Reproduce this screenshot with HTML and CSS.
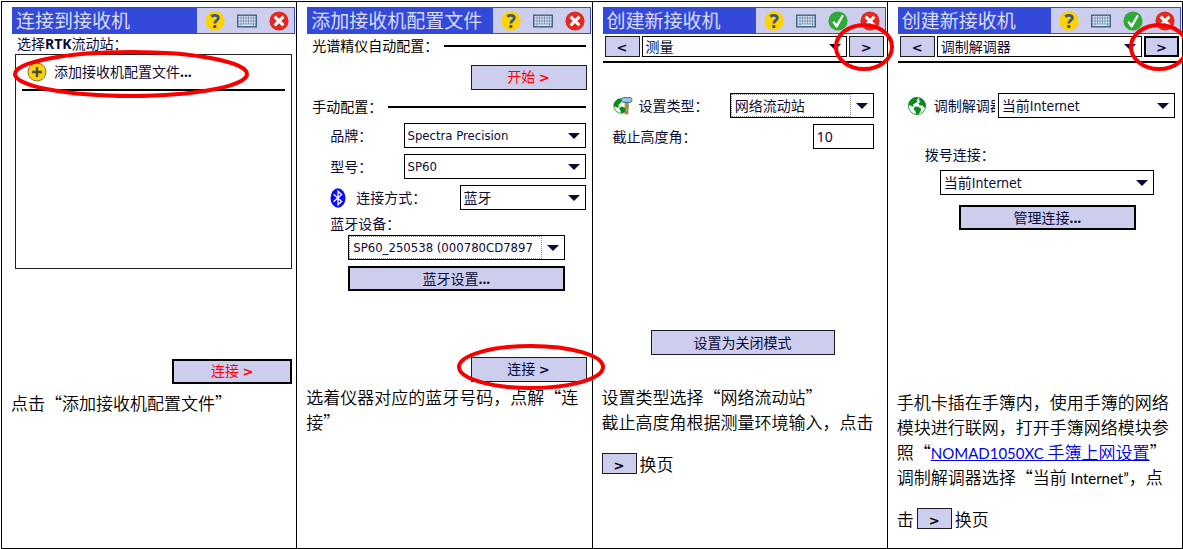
FILE: index.html
```html
<!DOCTYPE html>
<html lang="zh-CN">
    <head>
        <meta charset="UTF-8">
        <meta name="viewport" content="width=device-width, initial-scale=1.0">
        <title>接收机连接步骤</title>
        <link rel="stylesheet" href="styles.css">
    </head>
    <body>
        <!-- Shared icons -->
        <svg class="sprite" aria-hidden="true">
            <symbol id="i-help" viewBox="0 0 20 20">
                <circle cx="10" cy="10" r="9.7" fill="#ffd204"/>
                <path d="M6.2 5.6C8.4 3.9 13.4 3.8 13.4 7.1C13.4 9.6 9.8 9.4 9.8 12.4" fill="none" stroke="#3c5878" stroke-width="2.8"/>
                <rect x="8.3" y="14" width="3" height="3" fill="#3c5878"/>
            </symbol>
            <symbol id="i-keys" viewBox="0 0 20 14">
                <rect x="0.75" y="1.25" width="18.5" height="11.5" fill="#e4e8f6" stroke="#3f6487" stroke-width="1.5"/>
                <path d="M1 4H19M1 7H19M1 10H19" stroke="#6d8db0" stroke-width="0.8"/>
                <path d="M4 1V13M6.5 1V10M9 1V10M11.5 1V10M14 1V10M16.5 1V13" stroke="#6d8db0" stroke-width="0.8"/>
            </symbol>
            <symbol id="i-ok" viewBox="0 0 20 20">
                <circle cx="10" cy="10" r="9.6" fill="#2fa836"/>
                <path d="M4.4 11.2L6 10L8.6 12.8L14 3.8L15.8 4.8L9.4 16.4H8Z" fill="#fff"/>
            </symbol>
            <symbol id="i-close" viewBox="0 0 20 20">
                <circle cx="10" cy="10" r="9.6" fill="#e2281f"/>
                <path d="M5.6 5.6L14.4 14.4M14.4 5.6L5.6 14.4" stroke="#fff" stroke-width="3"/>
            </symbol>
            <symbol id="i-globe" viewBox="0 0 20 20">
                <circle cx="10" cy="10" r="8.6" fill="#f6fbf6" stroke="#0a8a1c" stroke-width="0.8"/>
                <path d="M1.4 9C1.6 5 5 1.6 9.6 1.3L11.4 2.6L9.4 4.2L10.6 5.6L8 7.6L6 8.2L6.8 10L5.4 10.6L3.6 9.4Z" fill="#0a8a1c"/>
                <path d="M12.6 1.8C16 2.8 18.6 6 18.7 10L17.4 12L15.6 9.4L12.6 9.2L11.4 7.4L13.4 5.6L12 4Z" fill="#0a8a1c"/>
                <path d="M7.4 11L10.6 10.6L14 12.6L13.6 15.4L11 18.6L9 18.4L8.6 15.4L6.8 13.4Z" fill="#0a8a1c"/>
            </symbol>
        </svg>

        <main class="steps">
            <section class="step">
                <div class="screen">
                    <header class="bar">
                        <h2>连接到接收机</h2>
                        <div class="tools">
                            <button type="button" aria-label="帮助"><svg class="icon"><use href="#i-help"/></svg></button>
                            <button type="button" aria-label="键盘"><svg class="keys"><use href="#i-keys"/></svg></button>
                            <button type="button" aria-label="关闭"><svg class="icon"><use href="#i-close"/></svg></button>
                        </div>
                    </header>
                    <p class="list-title">选择<b>RTK</b>流动站：</p>
                    <div class="list">
                        <button type="button" class="list-item">
                            <svg class="icon" viewBox="0 0 20 20" aria-hidden="true">
                                <circle cx="10" cy="10" r="9" fill="#ffd204" stroke="#77744a"/>
                                <path d="M10 5V15M5 10H15" stroke="#4a4a3c" stroke-width="2.4"/>
                            </svg>
                            添加接收机配置文件<b>...</b>
                        </button>
                    </div>
                    <button type="button" class="btn thick red connect-first">连接 <b class="arrow">&gt;</b></button>
                    <svg class="mark mark-list" viewBox="0 0 236 48" aria-hidden="true">
                        <ellipse cx="118" cy="24" rx="116" ry="22"/>
                    </svg>
                </div>
                <p class="note note-first">点击“添加接收机配置文件”</p>
            </section>

            <section class="step">
                <div class="screen">
                    <header class="bar">
                        <h2>添加接收机配置文件</h2>
                        <div class="tools">
                            <button type="button" aria-label="帮助"><svg class="icon"><use href="#i-help"/></svg></button>
                            <button type="button" aria-label="键盘"><svg class="keys"><use href="#i-keys"/></svg></button>
                            <button type="button" aria-label="关闭"><svg class="icon"><use href="#i-close"/></svg></button>
                        </div>
                    </header>
                    <h3 class="rule">光谱精仪自动配置：</h3>
                    <button type="button" class="btn red start">开始 <b class="arrow">&gt;</b></button>
                    <h3 class="rule">手动配置：</h3>
                    <div class="fields">
                        <div class="row">
                            <label for="brand">品牌：</label>
                            <span class="pick wide latin"><select id="brand"><option>Spectra Precision</option></select></span>
                        </div>
                        <div class="row">
                            <label for="model">型号：</label>
                            <span class="pick wide latin"><select id="model"><option>SP60</option></select></span>
                        </div>
                        <div class="row">
                            <svg class="bt" viewBox="0 0 16 20" aria-hidden="true">
                                <ellipse cx="8" cy="10" rx="7.5" ry="9.7" fill="#0a0aff"/>
                                <path d="M3.6 6.2L11.6 13.4L8 16.8V3.2L11.6 6.6L3.6 13.8" fill="none" stroke="#fff" stroke-width="1.3"/>
                            </svg>
                            <label for="link">连接方式：</label>
                            <span class="pick mid"><select id="link"><option>蓝牙</option></select></span>
                        </div>
                    </div>
                    <div class="device">
                        <label for="device">蓝牙设备：</label>
                        <span class="pick focus latin"><select id="device"><option>SP60_250538 (000780CD7897</option></select></span>
                        <button type="button" class="btn thick">蓝牙设置<b>...</b></button>
                    </div>
                    <div class="connect">
                        <button type="button" class="btn">连接 <b class="arrow">&gt;</b></button>
                        <svg class="mark mark-connect" viewBox="0 0 148 47" aria-hidden="true">
                            <ellipse cx="74" cy="23" rx="72" ry="21"/>
                        </svg>
                    </div>
                </div>
                <p class="note">选着仪器对应的蓝牙号码，点解“连<br>接”</p>
            </section>

            <section class="step">
                <div class="screen">
                    <header class="bar">
                        <h2>创建新接收机</h2>
                        <div class="tools">
                            <button type="button" aria-label="帮助"><svg class="icon"><use href="#i-help"/></svg></button>
                            <button type="button" aria-label="键盘"><svg class="keys"><use href="#i-keys"/></svg></button>
                            <button type="button" aria-label="确定"><svg class="icon"><use href="#i-ok"/></svg></button>
                            <button type="button" aria-label="关闭"><svg class="icon"><use href="#i-close"/></svg></button>
                        </div>
                    </header>
                    <nav class="pager">
                        <button type="button" class="btn"><b class="arrow">&lt;</b></button>
                        <span class="pick"><select aria-label="页面"><option>测量</option></select></span>
                        <button type="button" class="btn"><b class="arrow">&gt;</b></button>
                        <svg class="mark mark-next" viewBox="0 0 62 48" aria-hidden="true">
                            <ellipse cx="31" cy="24" rx="28" ry="22"/>
                        </svg>
                    </nav>
                    <div class="setup">
                        <div class="row">
                            <svg class="icon" viewBox="0 0 20 20" aria-hidden="true">
                                <circle cx="8" cy="10" r="7.2" fill="#f6fbf6" stroke="#0a8a1c" stroke-width="0.8"/>
                                <path d="M0.8 10C0.8 6 4 2.6 8.4 2.6L9 5L6.6 8L5.4 9L6 11L4 11.6Z" fill="#0a8a1c"/>
                                <path d="M6 12L9 10.6L12.4 12V16L8.4 17.4L7.4 14.6Z" fill="#0a8a1c"/>
                                <path d="M12.2 6H15V18H12.2Z" fill="#b99a45" stroke="#6c5a2a" stroke-width="0.6"/>
                                <rect x="8.5" y="1.6" width="10.5" height="4.8" rx="2.2" fill="#93c8e8" stroke="#48708c"/>
                            </svg>
                            <label for="kind">设置类型：</label>
                            <span class="pick focus"><select id="kind"><option>网络流动站</option></select></span>
                        </div>
                        <div class="row">
                            <label for="angle">截止高度角：</label>
                            <input type="text" id="angle" value="10">
                        </div>
                    </div>
                    <button type="button" class="btn off-mode">设置为关闭模式</button>
                </div>
                <p class="note">设置类型选择“网络流动站”<br>截止高度角根据测量环境输入，点击</p>
                <p class="note turn"><button type="button" class="btn"><b class="arrow">&gt;</b></button>换页</p>
            </section>

            <section class="step">
                <div class="screen">
                    <header class="bar">
                        <h2>创建新接收机</h2>
                        <div class="tools">
                            <button type="button" aria-label="帮助"><svg class="icon"><use href="#i-help"/></svg></button>
                            <button type="button" aria-label="键盘"><svg class="keys"><use href="#i-keys"/></svg></button>
                            <button type="button" aria-label="确定"><svg class="icon"><use href="#i-ok"/></svg></button>
                            <button type="button" aria-label="关闭"><svg class="icon"><use href="#i-close"/></svg></button>
                        </div>
                    </header>
                    <nav class="pager">
                        <button type="button" class="btn"><b class="arrow">&lt;</b></button>
                        <span class="pick"><select aria-label="页面"><option>调制解调器</option></select></span>
                        <button type="button" class="btn thick"><b class="arrow">&gt;</b></button>
                        <svg class="mark mark-next" viewBox="0 0 62 48" aria-hidden="true">
                            <ellipse cx="31" cy="24" rx="28" ry="22"/>
                        </svg>
                    </nav>
                    <div class="modem">
                        <svg class="icon" aria-hidden="true"><use href="#i-globe"/></svg>
                        <label for="modem">调制解调器</label>
                        <span class="pick"><select id="modem"><option>当前Internet</option></select></span>
                    </div>
                    <div class="dial">
                        <label for="dial">拨号连接：</label>
                        <span class="pick"><select id="dial"><option>当前Internet</option></select></span>
                        <button type="button" class="btn thick">管理连接<b>...</b></button>
                    </div>
                </div>
                <p class="note">手机卡插在手簿内，使用手簿的网络<br>模块进行联网，打开手簿网络模块参<br>照“<a href="#"><span class="en">NOMAD1050XC</span> 手簿上网设置</a>”<br>调制解调器选择“当前 <span class="en">Internet”</span>，点</p>
                <p class="note turn">击<button type="button" class="btn"><b class="arrow">&gt;</b></button>换页</p>
            </section>
        </main>
    </body>
</html>
```
FILE: styles.css
```css
* {
    box-sizing: border-box;
}
body {
    margin: 0;
    padding: 1px 0 0 1px;
    background: white;
    color: #0b0b36;
    font-family: "Noto Sans", "Noto Sans CJK SC", sans-serif;
    font-size: 14px;
    line-height: 20px;
}
h2, h3, p {
    margin: 0;
    font-weight: normal;
}
button, select, input {
    font: inherit;
    color: inherit;
    border-radius: 0;
}
button {
    padding: 0;
    border: none;
    background: none;
    cursor: pointer;
}
.sprite {
    position: absolute;
    width: 0;
    height: 0;
}
.icon {
    width: 20px;
    height: 20px;
    flex: none;
    display: block;
}
.keys {
    width: 20px;
    height: 14px;
    display: block;
}

/* Four columns with table lines */
.steps {
    display: grid;
    grid-template-columns: repeat(4, 1fr);
    min-height: calc(100vh - 1px);
    border: 1px solid black;
    border-right: none;
    overflow: hidden;
}
.step {
    padding: 5px 1px 8px 10px;
    border-right: 1px solid black;
    min-width: 0;
    display: flex;
    flex-direction: column;
}
.screen {
    position: relative;
    height: 377px;
    display: flex;
    flex-direction: column;
}
.step:last-child .screen {
    height: 382px;
}

/* Title bar */
.bar {
    display: flex;
    justify-content: space-between;
    height: 27px;
    padding: 1px;
    background: #3349d9;
}
.bar h2 {
    padding-left: 3px;
    color: #dcdcff;
    font-size: 19px;
    line-height: 26px;
    white-space: nowrap;
}
.tools {
    display: flex;
    align-items: center;
    gap: 12px;
    padding: 0 5px 0 8px;
    background: #cdcdee;
}

/* Buttons and drop-downs */
.btn {
    height: 25px;
    border: 1px solid #1c1c24;
    background: #cdcdee;
    line-height: 20px;
}
.arrow {
    font-family: "DejaVu Sans", sans-serif;
    font-size: 13px;
}
.thick {
    border: 2px solid black;
}
.red {
    color: red;
}
.pick {
    position: relative;
    height: 25px;
    border: 1px solid black;
    background: white;
    display: block;
    font-family: "DejaVu Sans Condensed", "Noto Sans CJK SC", sans-serif;
}
.pick::after {
    content: "";
    position: absolute;
    right: 5px;
    top: 9px;
    border: 6px solid transparent;
    border-top-color: #0b0b36;
    border-bottom: none;
    pointer-events: none;
}
.pick select {
    appearance: none;
    width: 100%;
    height: 23px;
    padding: 0 22px 0 3px;
    border: none;
    background: none;
    display: block;
}
.latin {
    font-size: 13px;
}
.focus select {
    width: calc(100% - 22px);
    padding-right: 0;
    border: 1px dotted #888;
}
.row {
    display: flex;
    align-items: center;
}
.row .pick {
    margin-left: auto;
}
label {
    white-space: nowrap;
}

/* Step 1 */
.list-title {
    padding-left: 5px;
}
.list {
    height: 216px;
    margin: 0 3px;
    padding: 0 6px;
    border: 1px solid #222;
}
.list-item {
    display: flex;
    align-items: center;
    width: 100%;
    height: 36px;
    padding-left: 5px;
    border-bottom: 2px solid black;
}
.list-item .icon {
    margin-right: 7px;
}
.connect-first {
    width: 120px;
    margin: 90px 3px 0 auto;
}

/* Step 2 */
.rule {
    display: flex;
    align-items: center;
    gap: 6px;
    padding: 0 5px;
    color: black;
    font-size: 14px;
    line-height: 24px;
}
.rule::after {
    content: "";
    flex: 1;
    height: 2px;
    background: black;
}
.start {
    width: 116px;
    margin: 7px 4px 5px auto;
}
.fields {
    display: flex;
    flex-direction: column;
    gap: 6px;
    padding: 4px 5px 0 23px;
}
.wide {
    width: 182px;
}
.mid {
    width: 126px;
}
.bt {
    width: 16px;
    height: 20px;
    margin-right: 10px;
}
.device {
    display: flex;
    flex-direction: column;
    padding: 3px 26px 0 41px;
}
.device label {
    margin-left: -18px;
    line-height: 22px;
}
.device .btn {
    margin-top: 6px;
}
.connect {
    position: relative;
    display: flex;
    justify-content: flex-end;
    margin-top: 66px;
    padding-right: 4px;
}
.connect .btn {
    width: 116px;
}

/* Steps 3 and 4 */
.pager {
    position: relative;
    display: flex;
    gap: 2px;
    padding: 2px 2px 4px;
    border-bottom: 2px solid black;
}
.pager .pick {
    flex: 1;
    height: 21px;
}
.pager .pick select {
    height: 19px;
}
.pager .pick::after {
    top: 7px;
}
.pager .btn, .turn .btn {
    width: 35px;
    height: 21px;
    line-height: 15px;
}
.setup {
    display: flex;
    flex-direction: column;
    gap: 6px;
    padding: 30px 12px 0 10px;
}
.setup .icon {
    margin-right: 6px;
}
.setup .pick {
    width: 144px;
}
.setup input {
    width: 61px;
    height: 25px;
    margin-left: auto;
    padding: 0 3px;
    border: 1px solid black;
}
.off-mode {
    width: 184px;
    margin: 181px auto 0 48px;
}
.modem {
    display: flex;
    align-items: center;
    padding: 30px 6px 0 9px;
}
.modem label {
    width: 61px;
    margin: 0 3px 0 7px;
    overflow: hidden;
}
.modem .pick {
    flex: 1;
}
.dial {
    display: flex;
    flex-direction: column;
    padding: 24px 27px 0 42px;
}
.dial label {
    margin-left: -15px;
    line-height: 26px;
}
.dial .pick {
    margin-top: 2px;
}
.dial .btn {
    margin: 10px 18px 0 19px;
}

/* Red rings */
.mark {
    position: absolute;
    z-index: 1;
    overflow: visible;
    pointer-events: none;
}
.mark ellipse {
    fill: none;
    stroke: #f80000;
    stroke-width: 4px;
}
.mark-list {
    left: 1px;
    top: 43px;
    width: 236px;
    height: 48px;
}
.mark-connect {
    right: -14px;
    top: -13px;
    width: 148px;
    height: 47px;
}
.mark-next {
    right: -9px;
    top: -11px;
    width: 62px;
    height: 48px;
}

/* Text under each screen */
.note {
    margin-left: -1px;
    color: black;
    font-family: "Noto Sans CJK SC", sans-serif;
    font-size: 17px;
    line-height: 25px;
    font-weight: 350;
    white-space: nowrap;
}
.note-first {
    margin-top: 6px;
}
.note a {
    color: #0000f0;
}
.en {
    font-family: Lato, sans-serif;
    font-size: 15px;
    line-height: 1;
    font-weight: normal;
}
.turn {
    display: flex;
    align-items: center;
    gap: 3px;
    margin-top: 17px;
}
```
